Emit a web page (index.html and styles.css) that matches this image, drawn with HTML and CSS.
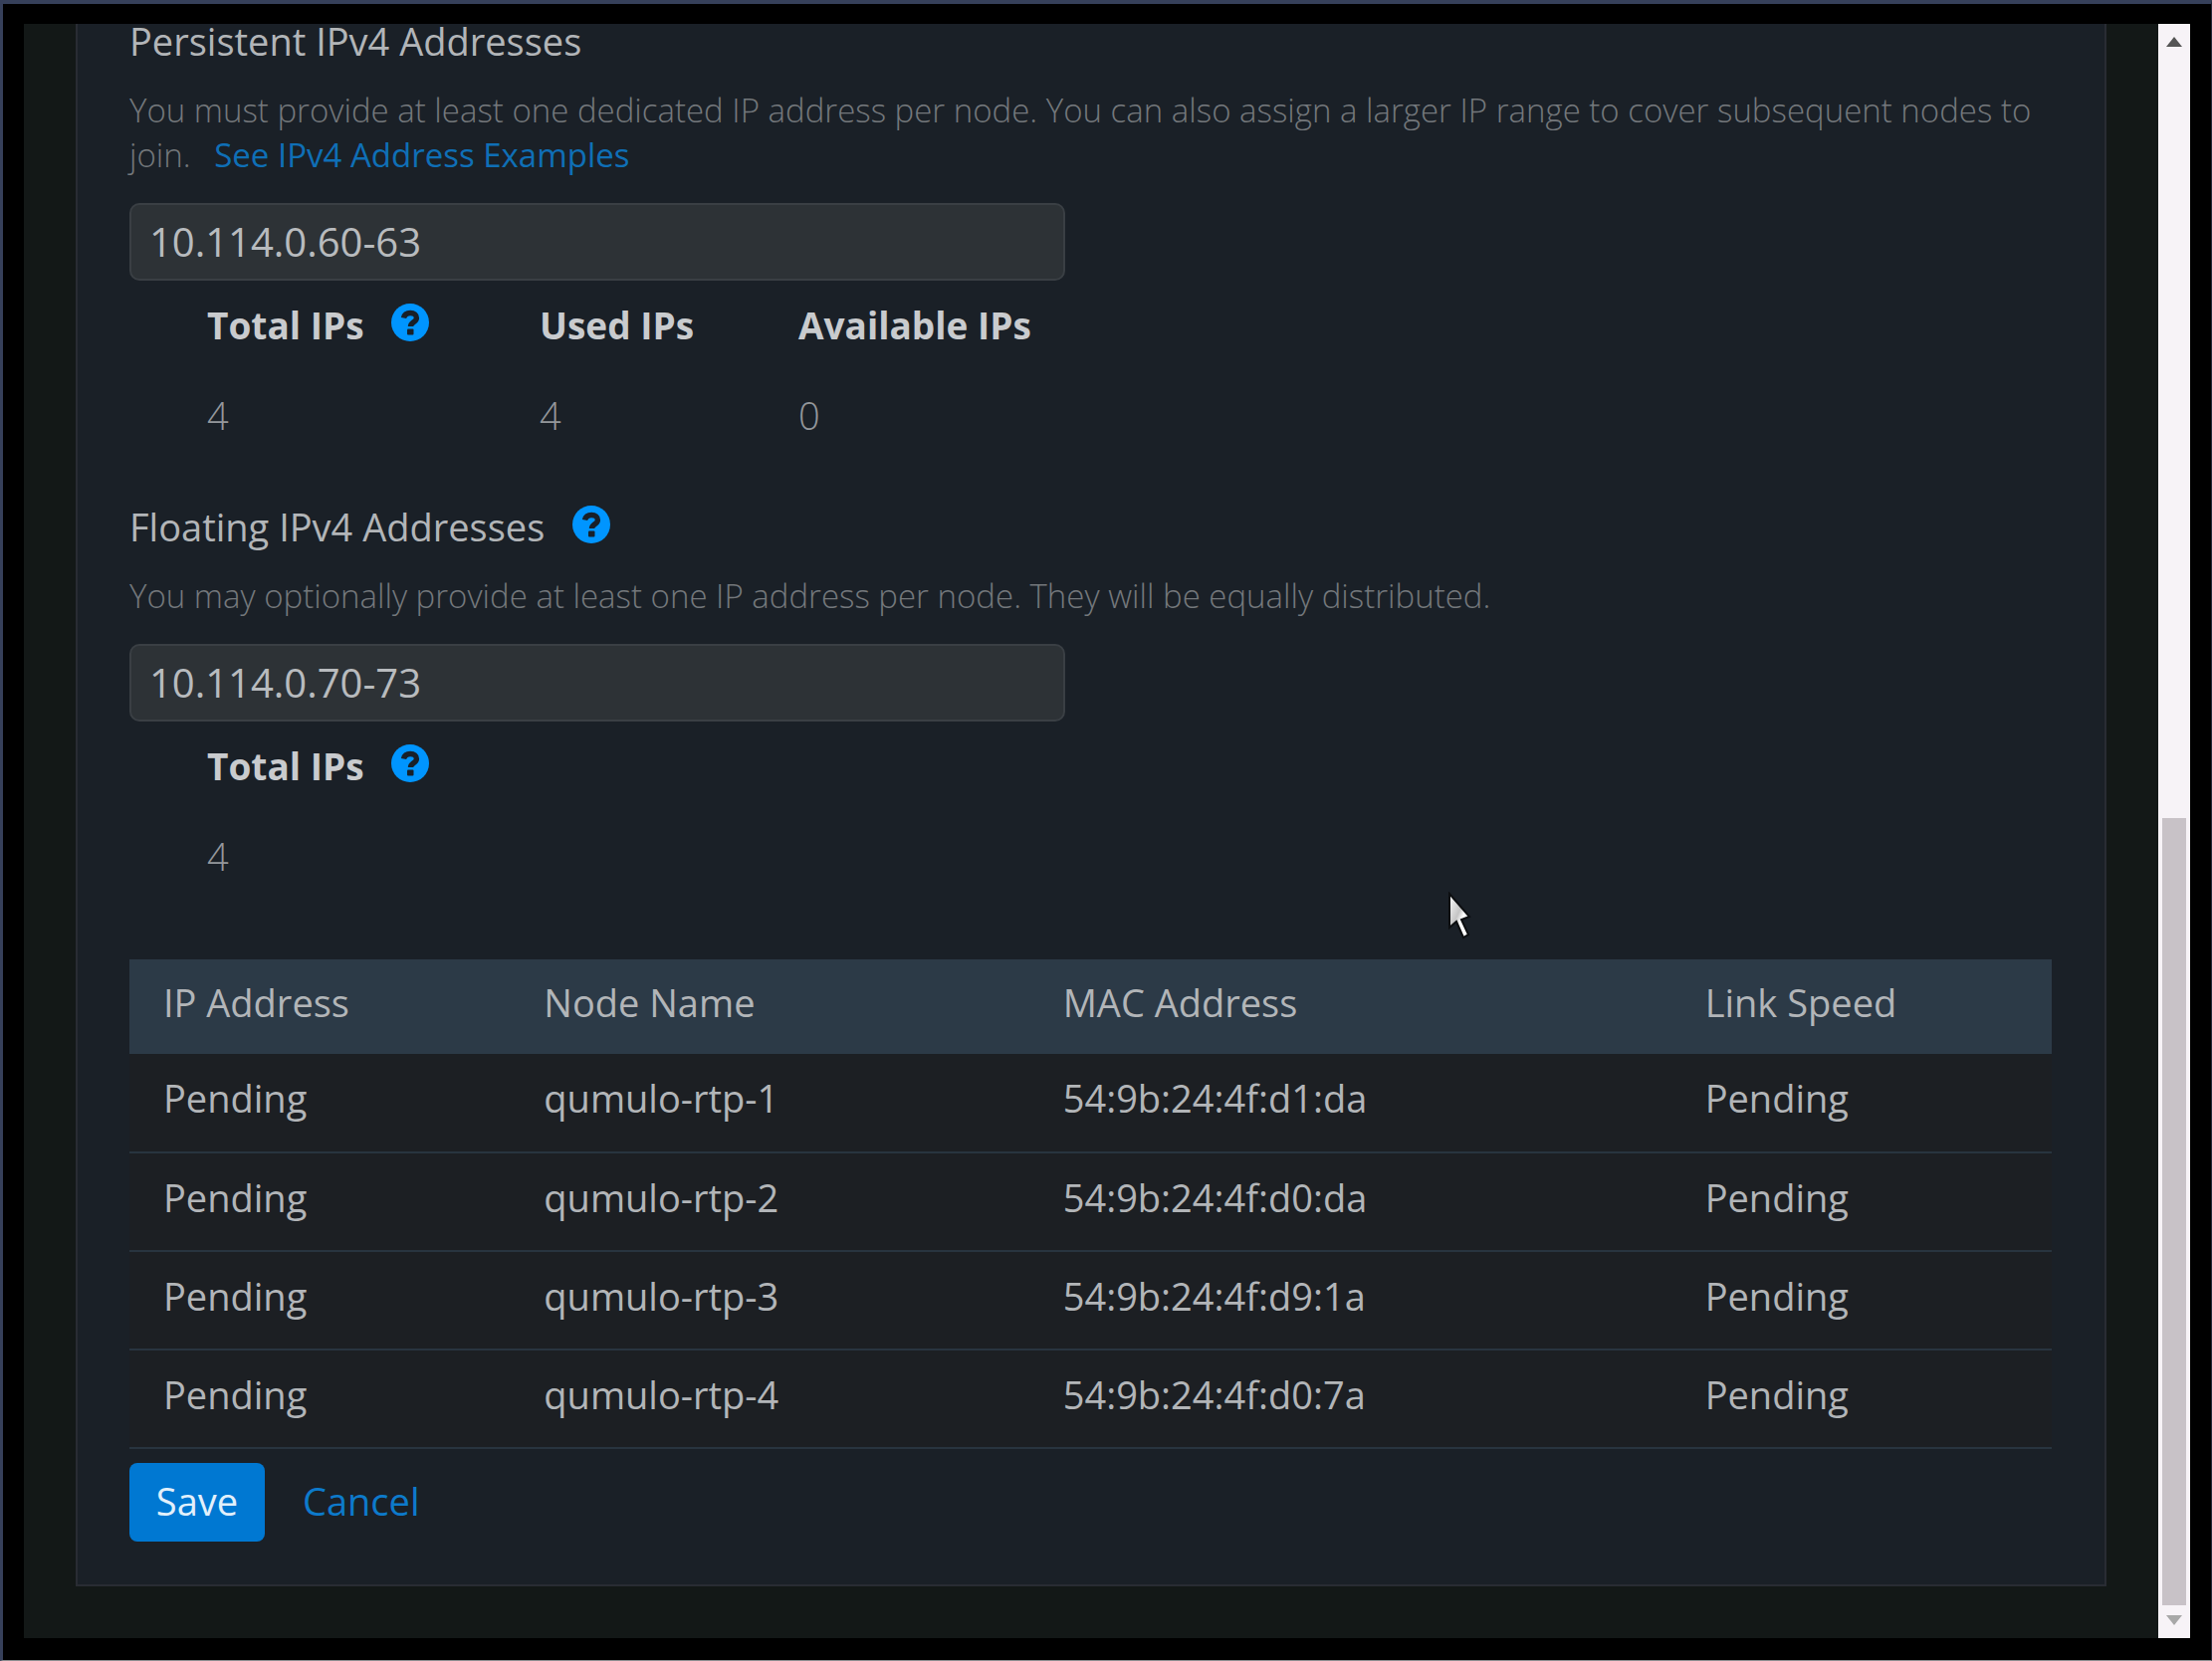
FILE: index.html
```html
<!DOCTYPE html>
<html lang="en">
  <head>
    <meta charset="utf-8">
    <title>Network Configuration</title>
    <link rel="stylesheet" href="styles.css">
  </head>
  <body>
    <!-- shared help icon -->
    <svg width="0" height="0" class="defs">
      <symbol id="help" viewBox="0 0 38 38">
        <circle cx="19" cy="19" r="19" fill="#0095ff"/>
        <path d="M12.500 14.500c.8-3.400 3.200-5 6.700-5 3.800 0 6.200 2 6.200 4.900 0 4.500-5.900 4.300-5.900 8.600" fill="none" stroke="#182029" stroke-width="5.400"/>
        <rect x="16" y="25.500" width="6.500" height="6" rx="1" fill="#182029"/>
      </symbol>
    </svg>

    <div class="screen">
      <main class="content">
        <form class="panel">
          <section class="group">
            <h2 class="title"><label for="persistent">Persistent IPv4 Addresses</label></h2>
            <p class="hint">You must provide at least one dedicated IP address per node. You can also assign a larger IP range to cover subsequent nodes to join. <a class="hint-link" href="#">See IPv4 Address Examples</a></p>
            <input class="field" id="persistent" type="text" value="10.114.0.60-63">
            <table class="stats">
              <tr>
                <th class="total">Total IPs <svg class="help"><use href="#help"/></svg></th>
                <th class="used">Used IPs</th>
                <th>Available IPs</th>
              </tr>
              <tr>
                <td>4</td>
                <td>4</td>
                <td>0</td>
              </tr>
            </table>
          </section>

          <section class="group">
            <h2 class="title"><label for="floating">Floating IPv4 Addresses</label> <svg class="help"><use href="#help"/></svg></h2>
            <p class="hint">You may optionally provide at least one IP address per node. They will be equally distributed.</p>
            <input class="field" id="floating" type="text" value="10.114.0.70-73">
            <table class="stats">
              <tr>
                <th class="total">Total IPs <svg class="help"><use href="#help"/></svg></th>
              </tr>
              <tr>
                <td>4</td>
              </tr>
            </table>
          </section>

          <table class="nodes">
            <colgroup>
              <col class="col-ip">
              <col class="col-name">
              <col class="col-mac">
              <col>
            </colgroup>
            <thead>
              <tr><th>IP Address</th><th>Node Name</th><th>MAC Address</th><th>Link Speed</th></tr>
            </thead>
            <tbody>
              <tr><td>Pending</td><td>qumulo-rtp-1</td><td>54:9b:24:4f:d1:da</td><td>Pending</td></tr>
              <tr><td>Pending</td><td>qumulo-rtp-2</td><td>54:9b:24:4f:d0:da</td><td>Pending</td></tr>
              <tr><td>Pending</td><td>qumulo-rtp-3</td><td>54:9b:24:4f:d9:1a</td><td>Pending</td></tr>
              <tr><td>Pending</td><td>qumulo-rtp-4</td><td>54:9b:24:4f:d0:7a</td><td>Pending</td></tr>
            </tbody>
          </table>

          <div class="actions">
            <button class="save" type="submit">Save</button>
            <button class="cancel" type="button">Cancel</button>
          </div>
        </form>
      </main>

      <div class="scrollbar">
        <svg class="arrow" viewBox="0 0 16 10"><path d="M0 10L8 0l8 10z" fill="#555"/></svg>
        <div class="track"><div class="thumb"></div></div>
        <svg class="arrow" viewBox="0 0 16 10"><path d="M0 0h16L8 10z" fill="#a8a8a8"/></svg>
      </div>
    </div>

    <svg class="cursor" viewBox="0 0 26 48">
      <defs>
        <linearGradient id="shine" x1="0" y1="0" x2="1" y2="1">
          <stop offset="0" stop-color="#fff"/>
          <stop offset=".45" stop-color="#c4c4c4"/>
          <stop offset=".6" stop-color="#fff"/>
        </linearGradient>
      </defs>
      <path d="M2 2v34l7-6 7 16 5-3-7-15 8-3z" fill="url(#shine)" stroke="#0c0e10" stroke-width="2"/>
    </svg>
  </body>
</html>
```
FILE: styles.css
```css
* {
  box-sizing: border-box;
}
body {
  margin: 0;
  height: 100vh;
  padding: 20px 21px 22px 21px;
  border: 1px solid #8f8f92;
  border-top: 4px solid #36405a;
  border-left: 3px solid #36405a;
  border-right-color: #22283a;
  background: #000;
  color: #b2b5b8;
  font: 38px/56px "Open Sans", sans-serif;
}
.defs {
  position: absolute;
}
.screen {
  display: flex;
  height: 100%;
  overflow: hidden;
  background: #131817;
}
.content {
  flex: 1;
  padding: 0 52px;
}

/* the panel is scrolled, so its top edge is out of view */
.panel {
  padding: 0 53px 43px 52px;
  border: 2px solid #292c33;
  border-top: 0;
  background: #1a2027;
}
.group {
  margin-bottom: 50px;
}
.title {
  margin: 0 0 29px;
  font-size: 38px;
  font-weight: 400;
  line-height: 35px;
}
.hint {
  margin: 0 0 26px;
  color: #74787c;
  font-size: 33px;
  font-weight: 300;
  line-height: 45px;
}
.hint-link {
  margin-left: 15px;
  color: #0f6fb6;
  font-weight: 400;
  text-decoration: none;
}
.field {
  display: block;
  width: 940px;
  max-width: 100%;
  height: 78px;
  padding: 0 18px 2px;
  border: 2px solid #3a3f44;
  border-radius: 10px;
  background: #2d3236;
  color: #b8bbbe;
  font: inherit;
  font-size: 40px;
}
.help {
  width: 38px;
  height: 38px;
  margin: -6px 0 -2px 18px;
}

.stats {
  margin-left: 78px;
  border-collapse: collapse;
}
.stats th,
.stats td {
  height: 90px;
  padding: 0;
  text-align: left;
}
.stats th {
  color: #c9cbce;
  font-size: 37px;
  font-weight: 700;
}
.stats td {
  color: #94979b;
  font-weight: 300;
}
.total {
  width: 334px;
}
.used {
  width: 260px;
}

.nodes {
  width: 100%;
  margin-top: 59px;
  border-collapse: collapse;
  table-layout: fixed;
}
.nodes th,
.nodes td {
  padding: 0 0 10px 34px;
  text-align: left;
  font-weight: 400;
}
.nodes th {
  height: 95px;
  background: #2c3a47;
}
.nodes td {
  height: 99px;
  border-bottom: 2px solid #28343f;
  background: #1c1f23;
}
.col-ip {
  width: 19.8%;
}
.col-name {
  width: 27%;
}
.col-mac {
  width: 33.4%;
}

.actions {
  display: flex;
  gap: 38px;
  margin-top: 14px;
}
.save,
.cancel {
  height: 79px;
  padding: 0 0 4px;
  border: 0;
  font: inherit;
  cursor: pointer;
}
.save {
  width: 136px;
  border-radius: 8px;
  background: #0078d2;
  color: #e2f0fb;
}
.cancel {
  background: none;
  color: #0d7acb;
}

.scrollbar {
  display: flex;
  flex-direction: column;
  align-items: center;
  width: 32px;
  padding: 13px 0;
  background: #f7f3f7;
}
.arrow {
  width: 16px;
  height: 10px;
}
.track {
  display: flex;
  flex: 1;
  align-items: flex-end;
  padding-bottom: 10px;
}
.thumb {
  width: 24px;
  height: 50.5%;
  background: #c8c2c7;
}

.cursor {
  position: absolute;
  top: 896px;
  left: 1454px;
  width: 26px;
  height: 48px;
}
```
